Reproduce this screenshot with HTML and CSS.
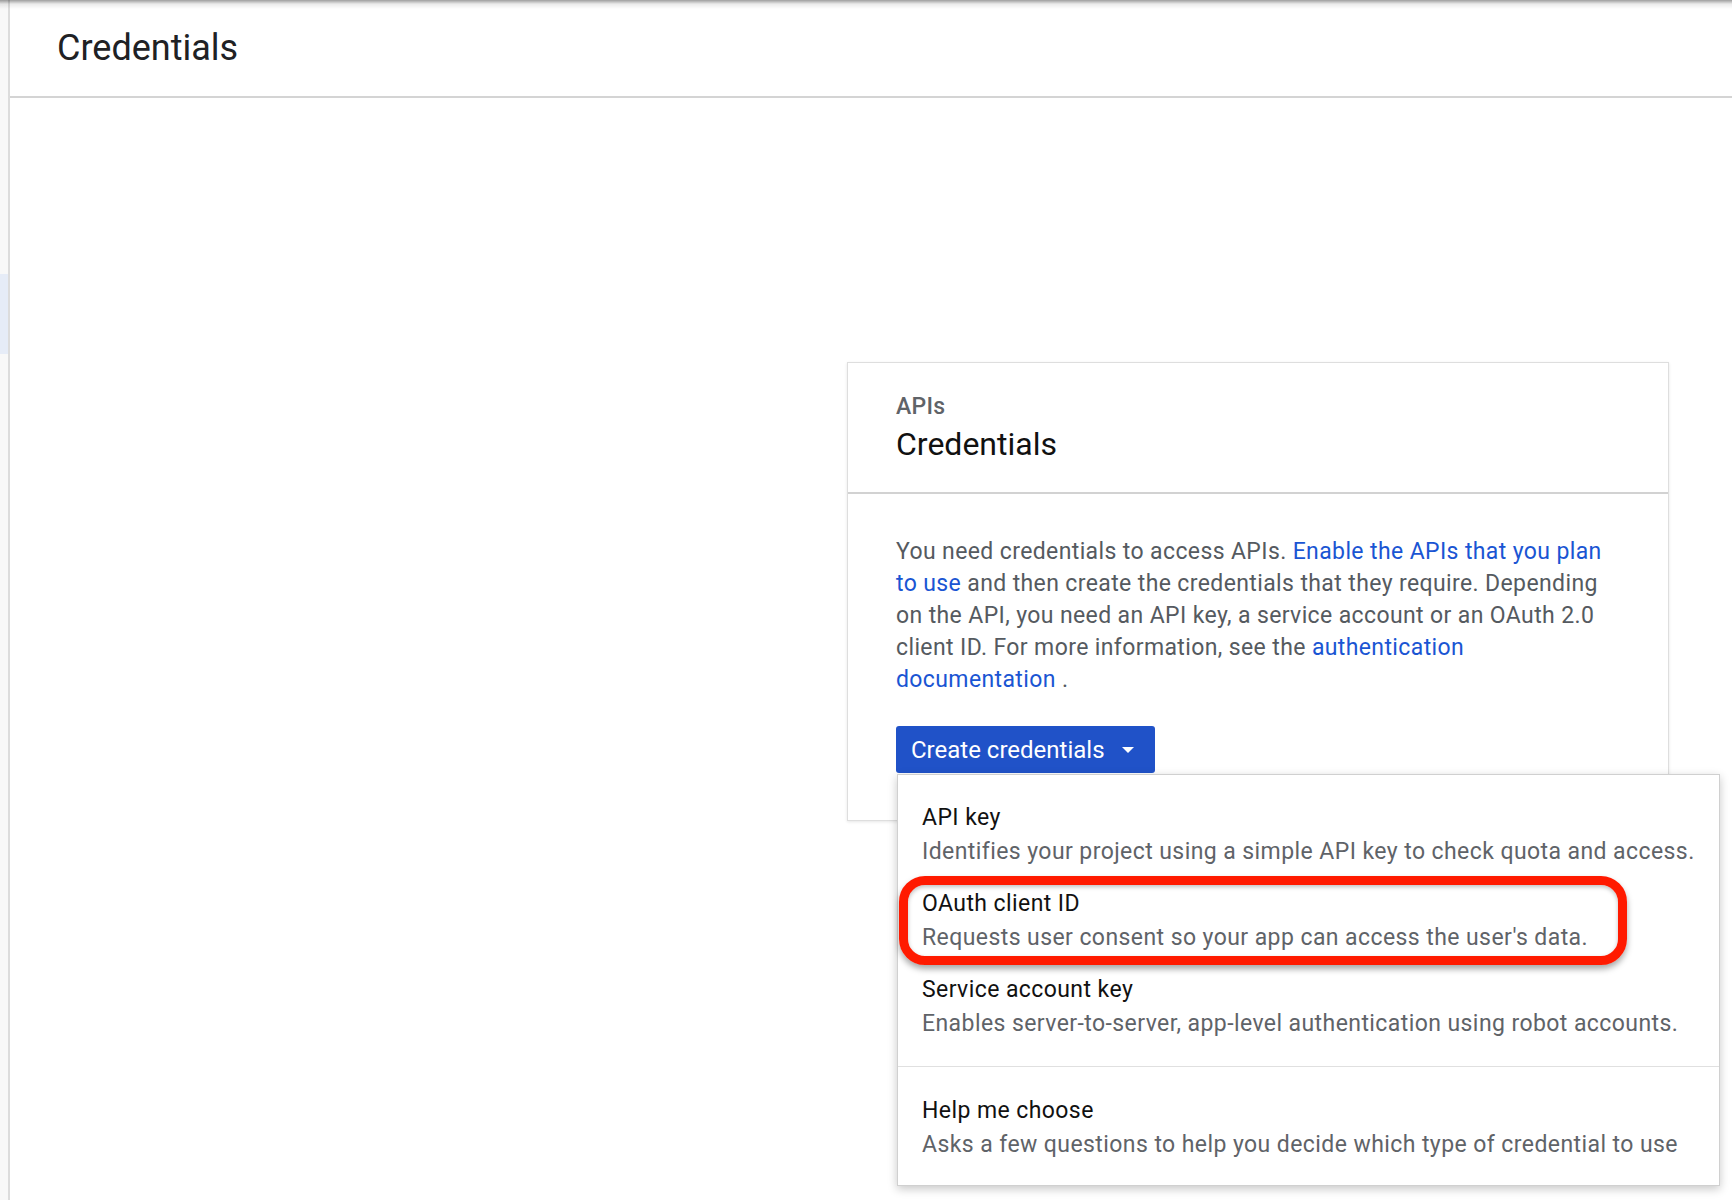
FILE: index.html
```html
<!DOCTYPE html>
<html lang="en">
<head>
<meta charset="utf-8">
<title>Credentials</title>
<link rel="stylesheet" href="styles.css">
</head>
<body>
<div class="top-shadow"></div>
<div class="page">
  <aside class="sidebar">
    <div class="sidebar-active"></div>
  </aside>
  <main class="main">
    <header class="topbar">
      <h1 class="page-title">Credentials</h1>
    </header>
    <section class="content">
      <div class="card">
        <div class="card-head">
          <div class="card-kicker">APIs</div>
          <div class="card-title">Credentials</div>
        </div>
        <div class="card-body">
          <p class="card-text">You need credentials to access APIs. <a class="link" href="#">Enable the APIs that you plan to use</a> and then create the credentials that they require. Depending on the API, you need an API key, a service account or an OAuth 2.0 client ID. For more information, see the <a class="link" href="#">authentication documentation</a> .</p>
          <div class="btn-wrap">
            <button class="btn-primary" type="button">
              <span>Create credentials</span>
              <svg class="caret" width="12" height="6" viewBox="0 0 12 6"><path d="M0 0h12L6 6z" fill="#fff"/></svg>
            </button>
            <div class="menu">
              <div class="menu-section">
                <div class="menu-item">
                  <div class="item-title">API key</div>
                  <div class="item-desc">Identifies your project using a simple API key to check quota and access.</div>
                </div>
                <div class="menu-item">
                  <div class="item-title">OAuth client ID</div>
                  <div class="item-desc">Requests user consent so your app can access the user's data.</div>
                </div>
                <div class="menu-item">
                  <div class="item-title">Service account key</div>
                  <div class="item-desc">Enables server-to-server, app-level authentication using robot accounts.</div>
                </div>
              </div>
              <div class="menu-section menu-section-last">
                <div class="menu-item">
                  <div class="item-title">Help me choose</div>
                  <div class="item-desc">Asks a few questions to help you decide which type of credential to use</div>
                </div>
              </div>
              <div class="highlight"></div>
            </div>
          </div>
        </div>
      </div>
    </section>
  </main>
</div>
</body>
</html>
```

FILE: styles.css
```css
* { box-sizing: border-box; }
html, body { margin: 0; padding: 0; }
body {
  font-family: Roboto, "Noto Sans", Arial, sans-serif;
  background: #fff;
  color: #202124;
  width: 1732px;
  height: 1200px;
  overflow: hidden;
  position: relative;
}
.top-shadow {
  position: absolute;
  left: 0; top: 0; right: 0;
  height: 9px;
  background: linear-gradient(to bottom, rgba(0,0,0,0.38), rgba(0,0,0,0.08) 45%, rgba(0,0,0,0));
  z-index: 5;
}
.page {
  display: flex;
  height: 1200px;
}
.sidebar {
  width: 10px;
  flex: 0 0 10px;
  background: #f8f8f8;
  border-right: 2px solid #dcdcdc;
}
.sidebar-active {
  margin-top: 274px;
  height: 80px;
  background: #e6ecf7;
}
.main {
  flex: 1;
  min-width: 0;
}
.topbar {
  height: 98px;
  border-bottom: 2px solid #d4d4d4;
  display: flex;
  align-items: center;
  padding-left: 47px;
}
.page-title {
  margin: 0;
  font-size: 36px;
  font-weight: 400;
  color: #202124;
  line-height: 42px;
}
.content {
  padding-top: 264px;
  padding-left: 837px;
}
.card {
  width: 822px;
  border: 1px solid #dedede;
  box-shadow: 0 1px 3px rgba(0,0,0,0.10);
  background: #fff;
}
.card-head {
  padding: 32px 48px 30px;
  border-bottom: 2px solid #d2d2d2;
}
.card-kicker {
  font-size: 23px;
  line-height: 24px;
  font-weight: 500;
  letter-spacing: 0.3px;
  color: #5f6368;
}
.card-title {
  margin-top: 7px;
  font-size: 32px;
  line-height: 36px;
  color: #111;
}
.card-body {
  padding: 42px 48px 47px;
}
.card-text {
  margin: 0;
  font-size: 23px;
  letter-spacing: 0.38px;
  line-height: 32px;
  color: #555a60;
}
.link {
  color: #1a55d3;
  text-decoration: none;
}
.btn-wrap {
  position: relative;
  margin-top: 30px;
  width: 259px;
}
.btn-primary {
  display: flex;
  align-items: center;
  gap: 17px;
  width: 259px;
  height: 47px;
  padding: 0 19px 0 15px;
  border: none;
  border-radius: 3px;
  background: #2052c8;
  color: #fff;
  font-family: Roboto, "Noto Sans", Arial, sans-serif;
  font-size: 24px;
  font-weight: 400;
  letter-spacing: 0;
  cursor: pointer;
}
.caret { flex: 0 0 auto; }
.menu {
  position: absolute;
  top: 48px;
  left: 1px;
  width: 823px;
  background: #fff;
  border: 1px solid #d0d0d0;
  box-shadow: 0 3px 9px rgba(0,0,0,0.22);
  z-index: 3;
}
.menu-section {
  padding: 27px 0 26px;
  border-bottom: 1px solid #e0e0e0;
  display: flex;
  flex-direction: column;
  gap: 20px;
}
.menu-section-last {
  border-bottom: none;
  padding: 28px 0 24px;
}
.menu-item {
  padding: 0 24px;
  white-space: nowrap;
}
.item-title {
  font-size: 23px;
  letter-spacing: 0.42px;
  line-height: 32px;
  color: #111;
}
.item-desc {
  margin-top: 1px;
  font-size: 23px;
  letter-spacing: 0.42px;
  line-height: 33px;
  color: #5f6368;
}
.highlight {
  position: absolute;
  left: 1px;
  top: 101px;
  width: 728px;
  height: 89px;
  border: 9px solid #ff1a00;
  border-radius: 26px;
  box-shadow: 0 4px 6px rgba(0,0,0,0.35), inset 0 2px 4px rgba(0,0,0,0.25);
  pointer-events: none;
}
```
